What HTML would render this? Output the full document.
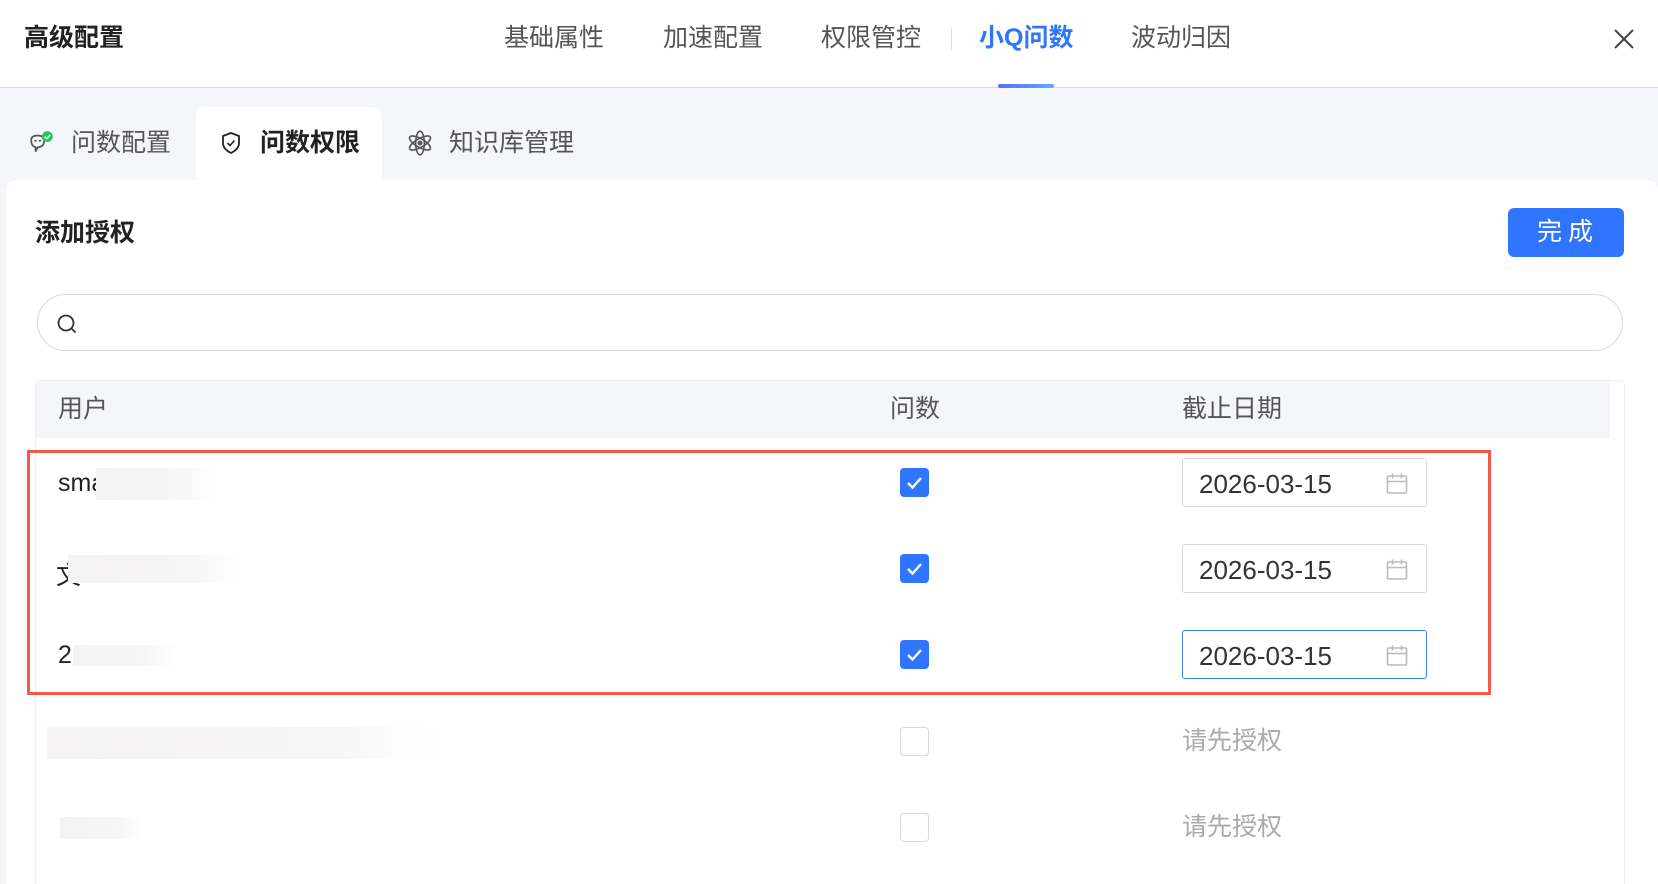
<!DOCTYPE html>
<html><head><meta charset="utf-8"><style>
*{margin:0;padding:0;box-sizing:border-box}
body{width:1658px;height:884px;overflow:hidden;background:#f5f6f9;font-family:"Liberation Sans","Noto Sans CJK SC",sans-serif;color:#333;position:relative}
.a{position:absolute;white-space:nowrap}
.hdr{position:absolute;left:0;top:0;width:1658px;height:88px;background:#fff;border-bottom:1px solid #dcdcdc}
.t{font-size:25px;line-height:25px}
.cb{position:absolute;width:29px;height:29px;border-radius:4px;background:#2f75ff}
.cb0{position:absolute;width:29px;height:29px;border-radius:4px;border:1px solid #d9d9d9;background:#fff}
.di{position:absolute;left:1182px;width:245px;height:49px;border:1px solid #d9d9d9;border-radius:3px;background:#fff}
.di span{position:absolute;left:16px;top:10px;font-size:26px;color:#333}
.di svg{position:absolute;left:202px;top:13px}
.blur{position:absolute;background:linear-gradient(90deg,#f4f2f2,#f7f6f6 70%,#fff)}
</style></head><body>
<div class="hdr">
 <div class="a t" style="left:24px;top:26px;font-weight:bold;color:#222">高级配置</div>
 <div class="a t" style="left:504px;top:26px;color:#555">基础属性</div>
 <div class="a t" style="left:663px;top:26px;color:#555">加速配置</div>
 <div class="a t" style="left:821px;top:26px;color:#555">权限管控</div>
 <div class="a" style="left:951px;top:28px;width:1px;height:22px;background:#ddd"></div>
 <div class="a t" style="left:979px;top:26px;color:#2f75ff;font-weight:bold">小Q问数</div>
 <div class="a" style="left:998px;top:84px;width:56px;height:4px;border-radius:2px;background:linear-gradient(90deg,#5b6cff,#5fa8ff)"></div>
 <div class="a t" style="left:1131px;top:26px;color:#555">波动归因</div>
 <svg class="a" style="left:1613px;top:28px" width="22" height="22" viewBox="0 0 22 22"><path d="M2 2L20 20M20 2L2 20" stroke="#444" stroke-width="2"/></svg>
</div>
<div class="a" style="left:196px;top:107px;width:186px;height:80px;background:#fff;border-radius:10px 10px 0 0"></div>
<div class="a" style="left:6px;top:180px;width:1652px;height:704px;background:#fff;border-radius:10px 10px 0 0"></div>
<div class="a" style="left:196px;top:170px;width:186px;height:20px;background:#fff"></div>
<svg class="a" style="left:28px;top:129px" width="28" height="28" viewBox="0 0 26 26"><path d="M3 10c0-3 3-4 6-4s6 1 6 5-3 6-6 6l-2 4v-4c-3-1-4-3-4-7z" fill="none" stroke="#555" stroke-width="1.6"/><path d="M6 11h2M10 11h2" stroke="#555" stroke-width="1.5"/><circle cx="18" cy="7" r="5" fill="#22c55e"/><path d="M15.5 7l2 2 3-3.5" stroke="#fff" stroke-width="1.4" fill="none"/></svg>
<div class="a t" style="left:71px;top:131px;color:#555">问数配置</div>
<svg class="a" style="left:219px;top:130px" width="24" height="26" viewBox="0 0 24 26"><path d="M12 3l8 3v7c0 5-4 8-8 10-4-2-8-5-8-10V6z" fill="none" stroke="#222" stroke-width="1.8"/><path d="M8.5 13l2.5 2.5 4.5-5" fill="none" stroke="#222" stroke-width="1.6"/></svg>
<div class="a t" style="left:260px;top:131px;color:#222;font-weight:bold">问数权限</div>
<svg class="a" style="left:406px;top:129px" width="28" height="28" viewBox="0 0 26 26" fill="none" stroke="#555" stroke-width="1.5"><ellipse cx="13" cy="13" rx="4" ry="11"/><ellipse cx="13" cy="13" rx="4" ry="11" transform="rotate(60 13 13)"/><ellipse cx="13" cy="13" rx="4" ry="11" transform="rotate(120 13 13)"/><circle cx="13" cy="13" r="1.5" fill="#555"/></svg>
<div class="a t" style="left:449px;top:131px;color:#555">知识库管理</div>

<div class="a t" style="left:35px;top:221px;font-weight:bold;color:#222">添加授权</div>
<div class="a" style="left:1508px;top:208px;width:116px;height:49px;background:#2f75ff;border-radius:6px;color:#fff;font-size:25px;line-height:49px;text-align:center;letter-spacing:6px;padding-left:4px">完成</div>
<div class="a" style="left:37px;top:294px;width:1586px;height:57px;border:1px solid #d9d9d9;border-radius:29px;background:#fff"></div>
<svg class="a" style="left:55px;top:312px" width="24" height="24" viewBox="0 0 24 24" fill="none" stroke="#333" stroke-width="1.8"><circle cx="11" cy="11" r="7.5"/><path d="M16.5 16.5l4 4"/></svg>

<div class="a" style="left:35px;top:380px;width:1590px;height:504px;border:1px solid #eceef2;border-bottom:none;border-radius:6px 6px 0 0"></div>
<div class="a" style="left:36px;top:381px;width:1574px;height:57px;background:#f5f6f9"></div>
<div class="a t" style="left:58px;top:397px;color:#555">用户</div>
<div class="a t" style="left:890px;top:397px;color:#555">问数</div>
<div class="a t" style="left:1182px;top:397px;color:#555">截止日期</div>

<div class="a" style="left:58px;top:469px;font-size:25px;color:#222">sma</div>
<div class="blur" style="left:96px;top:468px;width:118px;height:32px"></div>
<div class="a" style="left:56px;top:556px;font-size:25px;color:#222">文</div>
<div class="blur" style="left:68px;top:555px;width:172px;height:28px"></div>
<div class="a" style="left:58px;top:641px;font-size:25px;color:#222">2</div>
<div class="blur" style="left:73px;top:645px;width:104px;height:21px"></div>
<div class="blur" style="left:47px;top:727px;width:393px;height:32px"></div>
<div class="blur" style="left:60px;top:817px;width:82px;height:22px"></div>

<svg width="0" height="0" style="position:absolute"><defs><symbol id="ck" viewBox="0 0 29 29"><path d="M8 15l4.5 4.5L21 10" fill="none" stroke="#fff" stroke-width="2.4"/></symbol><symbol id="cal" viewBox="0 0 24 24"><rect x="2.5" y="4" width="19" height="17" rx="1" fill="none" stroke="#bbb" stroke-width="1.6"/><path d="M2.5 9.5h19M7.5 1.5v5M16.5 1.5v5" stroke="#bbb" stroke-width="1.6"/></symbol></defs></svg>
<div class="cb" style="left:900px;top:468px"><svg width="29" height="29"><use href="#ck"/></svg></div>
<div class="cb" style="left:900px;top:554px"><svg width="29" height="29"><use href="#ck"/></svg></div>
<div class="cb" style="left:900px;top:640px"><svg width="29" height="29"><use href="#ck"/></svg></div>
<div class="cb0" style="left:900px;top:727px"></div>
<div class="cb0" style="left:900px;top:813px"></div>

<div class="di" style="top:458px"><span>2026-03-15</span><svg width="24" height="24"><use href="#cal"/></svg></div>
<div class="di" style="top:544px"><span>2026-03-15</span><svg width="24" height="24"><use href="#cal"/></svg></div>
<div class="di" style="top:630px;border-color:#3b82f6"><span>2026-03-15</span><svg width="24" height="24"><use href="#cal"/></svg></div>
<div class="a t" style="left:1182px;top:729px;color:#aaa">请先授权</div>
<div class="a t" style="left:1182px;top:815px;color:#aaa">请先授权</div>

<div class="a" style="left:27px;top:450px;width:1464px;height:245px;border:3px solid #f25a4c"></div>
</body></html>
